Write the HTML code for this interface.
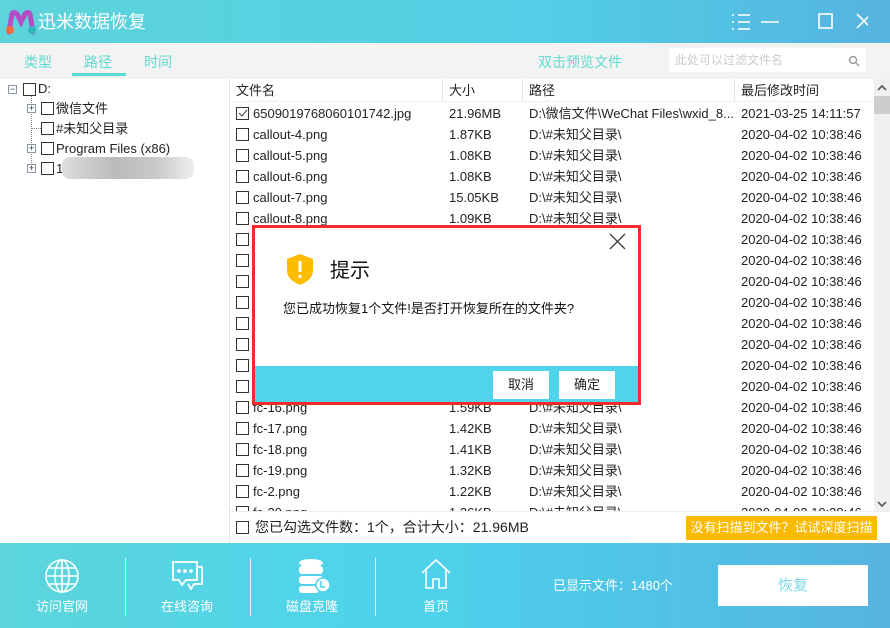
<!DOCTYPE html>
<html><head><meta charset="utf-8"><style>
*{margin:0;padding:0;box-sizing:border-box}
body{width:890px;height:628px;overflow:hidden;position:relative;font-family:"Liberation Sans","Noto Sans CJK SC",sans-serif;font-size:13px;line-height:16px;color:#222;background:#fff}
.a{position:absolute;white-space:nowrap}
#title{left:0;top:0;width:890px;height:43px;background:linear-gradient(90deg,#5dd3da,#52cfe6 60%,#55b3e0)}
#tabs{left:0;top:43px;width:890px;height:36px;background:#f3f3f3}
.tab{top:53px;font-size:14px;line-height:18px;color:#5cdbd0}
.cb{position:absolute;width:13px;height:13px;border:1px solid #333;background:#fff}
.row{position:absolute;left:230px;width:644px;height:21px}
.row span{position:absolute;top:3px;line-height:16px;white-space:nowrap}
.row .cb{left:6px;top:4px}
.n{left:23px}.s{left:219px}.p{left:299px}.d{left:511px}
.hd{position:absolute;top:83px;font-size:13px;line-height:16px}
.fi{position:absolute;top:558px}
.fl{position:absolute;top:599px;color:#fff;font-size:13px;width:80px;text-align:center}
.dv{position:absolute;top:558px;width:1px;height:58px;background:rgba(255,255,255,.8)}
.pl{position:absolute;width:9px;height:9px;border:1px solid #8a96a8;background:#fff;font-size:9px;line-height:7px;text-align:center;color:#233}
</style></head><body>
<div id="title" class="a"></div>
<svg class="a" style="left:5px;top:10px" width="32" height="26" viewBox="0 0 32 26">
<path d="M4 22 L7 4 Q9 1 12 4 L16 12 L20 4 Q23 1 25 4 L28 22" fill="none" stroke="#b54dc6" stroke-width="5" stroke-linecap="round"/>
<circle cx="5" cy="20" r="4" fill="#f56a3a"/><circle cx="27" cy="20" r="4" fill="#2fb7c0"/></svg>
<div class="a" style="left:38px;top:11px;color:#fff;font-size:18px;line-height:22px">迅米数据恢复</div>
<svg class="a" style="left:728px;top:12px" width="140" height="20" viewBox="0 0 140 20">
<g stroke="#fff" stroke-width="1.6" fill="none">
<path d="M4 3h2M10 3h12M4 10h2M10 10h12M4 17h2M10 17h12"/>
<path d="M33 10h18"/>
<rect x="91" y="2" width="13" height="14"/>
<path d="M129 2l14 14M143 2l-14 14"/>
</g></svg>
<div id="tabs" class="a"></div>
<div class="a tab" style="left:24px">类型</div>
<div class="a tab" style="left:84px">路径</div>
<div class="a" style="left:72px;top:73px;width:54px;height:3px;background:#5cdbd0"></div>
<div class="a tab" style="left:144px">时间</div>
<div class="a tab" style="left:538px">双击预览文件</div>
<div class="a" style="left:669px;top:48px;width:197px;height:24px;background:#fff"></div>
<div class="a" style="left:675px;top:53px;color:#ccc;font-size:12px;line-height:15px">此处可以过滤文件名</div>
<svg class="a" style="left:848px;top:55px" width="12" height="12"><circle cx="5" cy="5" r="3.5" stroke="#999" stroke-width="1.4" fill="none"/><path d="M8 8l3 3" stroke="#999" stroke-width="1.4"/></svg>

<!-- left tree -->
<div class="a" style="left:229px;top:79px;width:1px;height:464px;background:#e6e6e6"></div>
<div class="pl" style="left:8px;top:85px">−</div>
<div class="cb" style="left:23px;top:83px"></div>
<div class="a" style="left:38px;top:81px">D:</div>
<div class="a" style="left:31px;top:96px;height:75px;border-left:1px dotted #888"></div>
<div class="pl" style="left:27px;top:104px">+</div><div class="cb" style="left:41px;top:102px"></div><div class="a" style="left:56px;top:101px">微信文件</div>
<div class="a" style="left:32px;top:128px;width:9px;border-top:1px dotted #888"></div><div class="cb" style="left:41px;top:122px"></div><div class="a" style="left:56px;top:121px">#未知父目录</div>
<div class="pl" style="left:27px;top:144px">+</div><div class="cb" style="left:41px;top:142px"></div><div class="a" style="left:56px;top:141px">Program Files (x86)</div>
<div class="pl" style="left:27px;top:164px">+</div><div class="cb" style="left:41px;top:162px"></div><div class="a" style="left:56px;top:161px">1</div>
<div class="a" style="left:62px;top:157px;width:132px;height:22px;border-radius:8px;background:linear-gradient(90deg,#ddd,#bbb 40%,#c8c8c8 70%,#eee)"></div>

<!-- list header -->
<div class="a" style="left:230px;top:79px;width:644px;height:23px;background:#fff;border-bottom:1px solid #eee"></div>
<div class="a" style="left:442px;top:79px;width:1px;height:23px;background:#e6e6e6"></div>
<div class="a" style="left:522px;top:79px;width:1px;height:23px;background:#e6e6e6"></div>
<div class="a" style="left:734px;top:79px;width:1px;height:23px;background:#e6e6e6"></div>
<div class="hd" style="left:236px">文件名</div><div class="hd" style="left:449px">大小</div><div class="hd" style="left:529px">路径</div><div class="hd" style="left:741px">最后修改时间</div>

<div class="a" style="left:230px;top:103px;width:644px;height:408px;overflow:hidden">
<div style="position:relative;left:-230px;top:-103px">
<div class="row" style="top:103px"><div class="cb"><svg width="11" height="11" style="position:absolute;left:0;top:0"><path d="M2 5l3 3 5-6" stroke="#555" fill="none" stroke-width="1.2"/></svg></div><span class="n">6509019768060101742.jpg</span><span class="s">21.96MB</span><span class="p">D:\微信文件\WeChat Files\wxid_8...</span><span class="d">2021-03-25 14:11:57</span></div>
<div class="row" style="top:124px"><div class="cb"></div><span class="n">callout-4.png</span><span class="s">1.87KB</span><span class="p">D:\#未知父目录\</span><span class="d">2020-04-02 10:38:46</span></div>
<div class="row" style="top:145px"><div class="cb"></div><span class="n">callout-5.png</span><span class="s">1.08KB</span><span class="p">D:\#未知父目录\</span><span class="d">2020-04-02 10:38:46</span></div>
<div class="row" style="top:166px"><div class="cb"></div><span class="n">callout-6.png</span><span class="s">1.08KB</span><span class="p">D:\#未知父目录\</span><span class="d">2020-04-02 10:38:46</span></div>
<div class="row" style="top:187px"><div class="cb"></div><span class="n">callout-7.png</span><span class="s">15.05KB</span><span class="p">D:\#未知父目录\</span><span class="d">2020-04-02 10:38:46</span></div>
<div class="row" style="top:208px"><div class="cb"></div><span class="n">callout-8.png</span><span class="s">1.09KB</span><span class="p">D:\#未知父目录\</span><span class="d">2020-04-02 10:38:46</span></div>
<div class="row" style="top:229px"><div class="cb"></div><span class="n">callout-9.png</span><span class="s">1.10KB</span><span class="p">D:\#未知父目录\</span><span class="d">2020-04-02 10:38:46</span></div>
<div class="row" style="top:250px"><div class="cb"></div><span class="n">fc-1.png</span><span class="s">1.20KB</span><span class="p">D:\#未知父目录\</span><span class="d">2020-04-02 10:38:46</span></div>
<div class="row" style="top:271px"><div class="cb"></div><span class="n">fc-10.png</span><span class="s">1.30KB</span><span class="p">D:\#未知父目录\</span><span class="d">2020-04-02 10:38:46</span></div>
<div class="row" style="top:292px"><div class="cb"></div><span class="n">fc-11.png</span><span class="s">1.30KB</span><span class="p">D:\#未知父目录\</span><span class="d">2020-04-02 10:38:46</span></div>
<div class="row" style="top:313px"><div class="cb"></div><span class="n">fc-12.png</span><span class="s">1.30KB</span><span class="p">D:\#未知父目录\</span><span class="d">2020-04-02 10:38:46</span></div>
<div class="row" style="top:334px"><div class="cb"></div><span class="n">fc-13.png</span><span class="s">1.30KB</span><span class="p">D:\#未知父目录\</span><span class="d">2020-04-02 10:38:46</span></div>
<div class="row" style="top:355px"><div class="cb"></div><span class="n">fc-14.png</span><span class="s">1.30KB</span><span class="p">D:\#未知父目录\</span><span class="d">2020-04-02 10:38:46</span></div>
<div class="row" style="top:376px"><div class="cb"></div><span class="n">fc-15.png</span><span class="s">1.30KB</span><span class="p">D:\#未知父目录\</span><span class="d">2020-04-02 10:38:46</span></div>
<div class="row" style="top:397px"><div class="cb"></div><span class="n">fc-16.png</span><span class="s">1.59KB</span><span class="p">D:\#未知父目录\</span><span class="d">2020-04-02 10:38:46</span></div>
<div class="row" style="top:418px"><div class="cb"></div><span class="n">fc-17.png</span><span class="s">1.42KB</span><span class="p">D:\#未知父目录\</span><span class="d">2020-04-02 10:38:46</span></div>
<div class="row" style="top:439px"><div class="cb"></div><span class="n">fc-18.png</span><span class="s">1.41KB</span><span class="p">D:\#未知父目录\</span><span class="d">2020-04-02 10:38:46</span></div>
<div class="row" style="top:460px"><div class="cb"></div><span class="n">fc-19.png</span><span class="s">1.32KB</span><span class="p">D:\#未知父目录\</span><span class="d">2020-04-02 10:38:46</span></div>
<div class="row" style="top:481px"><div class="cb"></div><span class="n">fc-2.png</span><span class="s">1.22KB</span><span class="p">D:\#未知父目录\</span><span class="d">2020-04-02 10:38:46</span></div>
<div class="row" style="top:502px"><div class="cb"></div><span class="n">fc-20.png</span><span class="s">1.26KB</span><span class="p">D:\#未知父目录\</span><span class="d">2020-04-02 10:38:46</span></div>
</div></div>

<!-- scrollbar -->
<div class="a" style="left:874px;top:79px;width:16px;height:433px;background:#f0f0f0"></div>
<div class="a" style="left:874px;top:96px;width:16px;height:18px;background:#cdcdcd"></div>
<svg class="a" style="left:877px;top:84px" width="10" height="8"><path d="M1 6l4-4 4 4" stroke="#606060" stroke-width="1.8" fill="none"/></svg>
<svg class="a" style="left:877px;top:500px" width="10" height="8"><path d="M1 2l4 4 4-4" stroke="#606060" stroke-width="1.8" fill="none"/></svg>

<!-- status -->
<div class="a" style="left:230px;top:511px;width:660px;height:1px;background:#eee"></div>
<div class="cb" style="left:236px;top:521px"></div>
<div class="a" style="left:255px;top:519px;font-size:14px;line-height:17px">您已勾选文件数：1个，合计大小：21.96MB</div>
<div class="a" style="left:686px;top:516px;width:191px;height:24px;background:#fbb900;color:#fff;font-size:13px;line-height:24px;text-align:center">没有扫描到文件？试试深度扫描</div>

<!-- footer -->
<div class="a" style="left:0;top:543px;width:890px;height:85px;background:linear-gradient(90deg,#5cd5dc,#4dd3ec 45%,#55b4e0)"></div>
<svg class="fi" style="left:44px" width="36" height="36" viewBox="0 0 36 36" fill="none" stroke="#fff" stroke-width="1.6"><circle cx="18" cy="18" r="16"/><ellipse cx="18" cy="18" rx="7" ry="16"/><path d="M18 2v32M2 18h32M5 10h26M5 26h26"/></svg>
<svg class="fi" style="left:170px" width="36" height="36" viewBox="0 0 36 36" fill="none" stroke="#fff" stroke-width="1.8"><path d="M3 4h24v18H16l-4 5-3-5H3z"/><path d="M27 9h5v17h-8l-3 5-3-5"/><circle cx="9" cy="13" r="1" fill="#fff"/><circle cx="15" cy="13" r="1" fill="#fff"/><circle cx="21" cy="13" r="1" fill="#fff"/></svg>
<svg class="fi" style="left:296px" width="36" height="36" viewBox="0 0 36 36" fill="#fff"><ellipse cx="15" cy="5" rx="12" ry="4"/><rect x="3" y="8" width="24" height="8" rx="3"/><rect x="3" y="18" width="24" height="8" rx="3"/><rect x="3" y="28" width="20" height="7" rx="3"/><circle cx="27" cy="27" r="7" stroke="#4dd3ec" stroke-width="1.5"/><path d="M25 23v6h4" stroke="#4dd3ec" stroke-width="1.5" fill="none"/></svg>
<svg class="fi" style="left:420px" width="32" height="32" viewBox="0 0 32 32" fill="none" stroke="#fff" stroke-width="1.6"><path d="M2 15L16 2l14 13M6 12v18h7v-9h6v9h7V12"/></svg>
<div class="fl" style="left:22px">访问官网</div>
<div class="fl" style="left:147px">在线咨询</div>
<div class="fl" style="left:272px">磁盘克隆</div>
<div class="fl" style="left:396px">首页</div>
<div class="dv" style="left:125px"></div><div class="dv" style="left:250px"></div><div class="dv" style="left:375px"></div>
<div class="a" style="left:553px;top:578px;color:#fff;font-size:13px">已显示文件：1480个</div>
<div class="a" style="left:718px;top:565px;width:150px;height:41px;background:#fff;color:#7fd9e6;font-size:15px;line-height:41px;text-align:center">恢复</div>

<!-- dialog -->
<div class="a" style="left:252px;top:225px;width:389px;height:180px;border:3px solid #f52a2a;background:#fff"></div>
<div class="a" style="left:255px;top:366px;width:383px;height:36px;background:#4fd4ec"></div>
<svg class="a" style="left:609px;top:233px" width="17" height="17"><path d="M1 1l15 15M16 1L1 16" stroke="#444" stroke-width="1.4"/></svg>
<svg class="a" style="left:287px;top:254px" width="26" height="31" viewBox="0 0 26 31"><path d="M13 0L26 5v11c0 8-6 12-13 15C6 28 0 24 0 16V5z" fill="#fdbc00"/><rect x="11.5" y="7" width="3" height="11" fill="#fff"/><rect x="11.5" y="21" width="3" height="3" fill="#fff"/></svg>
<div class="a" style="left:330px;top:258px;font-size:20px;line-height:26px;color:#111">提示</div>
<div class="a" style="left:283px;top:301px;font-size:13px;color:#111">您已成功恢复1个文件!是否打开恢复所在的文件夹?</div>
<div class="a" style="left:493px;top:371px;width:56px;height:28px;background:#fff;font-size:13px;line-height:28px;text-align:center">取消</div>
<div class="a" style="left:559px;top:371px;width:56px;height:28px;background:#fff;font-size:13px;line-height:28px;text-align:center">确定</div>
</body></html>
